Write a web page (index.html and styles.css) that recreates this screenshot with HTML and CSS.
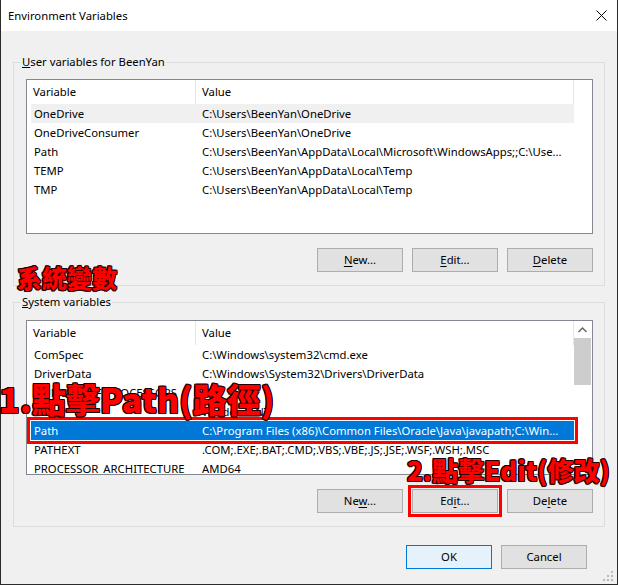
FILE: index.html
```html
<!DOCTYPE html>
<html lang="en">
<head>
<meta charset="utf-8">
<title>Environment Variables</title>
<link rel="stylesheet" href="styles.css">
</head>
<body>
<div class="window">
  <div class="titlebar">
    <span class="title">Environment Variables</span>
    <svg class="close" width="11" height="11" viewBox="0 0 11 11"><path d="M0.5 0.5L10.5 10.5M10.5 0.5L0.5 10.5" stroke="#000" stroke-width="1" fill="none"/></svg>
  </div>
  <div class="content">
    <fieldset class="group group-user">
      <legend><u>U</u>ser variables for BeenYan</legend>
      <div class="list">
        <div class="list-main">
          <div class="list-header"><div class="hcell hname">Variable</div><div class="hcell hvalue">Value</div></div>
          <div class="rows">
            <div class="row hover"><span class="name">OneDrive</span><span class="value">C:\Users\BeenYan\OneDrive</span></div>
            <div class="row"><span class="name">OneDriveConsumer</span><span class="value">C:\Users\BeenYan\OneDrive</span></div>
            <div class="row"><span class="name">Path</span><span class="value">C:\Users\BeenYan\AppData\Local\Microsoft\WindowsApps;;C:\Use...</span></div>
            <div class="row"><span class="name">TEMP</span><span class="value">C:\Users\BeenYan\AppData\Local\Temp</span></div>
            <div class="row"><span class="name">TMP</span><span class="value">C:\Users\BeenYan\AppData\Local\Temp</span></div>
          </div>
        </div>
        <div class="scroll-space"></div>
      </div>
      <div class="buttons">
        <button class="btn"><u>N</u>ew...</button>
        <button class="btn"><u>E</u>dit...</button>
        <button class="btn"><u>D</u>elete</button>
      </div>
    </fieldset>

    <fieldset class="group group-system">
      <legend><u>S</u>ystem variables</legend>
      <div class="list">
        <div class="list-main">
          <div class="list-header"><div class="hcell hname">Variable</div><div class="hcell hvalue">Value</div></div>
          <div class="rows">
            <div class="row"><span class="name">ComSpec</span><span class="value">C:\Windows\system32\cmd.exe</span></div>
            <div class="row"><span class="name">DriverData</span><span class="value">C:\Windows\System32\Drivers\DriverData</span></div>
            <div class="row"><span class="name">NUMBER_OF_PROCESSORS</span><span class="value">8</span></div>
            <div class="row"><span class="name">OS</span><span class="value">Windows_NT</span></div>
            <div class="row selected marked"><span class="name">Path</span><span class="value">C:\Program Files (x86)\Common Files\Oracle\Java\javapath;C:\Win...</span></div>
            <div class="row"><span class="name">PATHEXT</span><span class="value">.COM;.EXE;.BAT;.CMD;.VBS;.VBE;.JS;.JSE;.WSF;.WSH;.MSC</span></div>
            <div class="row"><span class="name">PROCESSOR_ARCHITECTURE</span><span class="value">AMD64</span></div>
          </div>
        </div>
        <div class="scrollbar">
          <div class="sb-arrow"><svg width="9" height="6" viewBox="0 0 9 6"><path d="M0.5 5L4.5 1L8.5 5" stroke="#606060" stroke-width="1.4" fill="none"/></svg></div>
          <div class="sb-thumb"></div>
        </div>
      </div>
      <div class="buttons">
        <button class="btn">Ne<u>w</u>...</button>
        <button class="btn marked">Ed<u>i</u>t...</button>
        <button class="btn">De<u>l</u>ete</button>
      </div>
    </fieldset>
  </div>
  <div class="footer">
    <button class="btn ok">OK</button>
    <button class="btn">Cancel</button>
  </div>
  <svg class="grip" width="10" height="10" viewBox="0 0 10 10">
    <rect x="8" y="0" width="2" height="2" fill="#b8b8b8"/>
    <rect x="4" y="4" width="2" height="2" fill="#b8b8b8"/>
    <rect x="8" y="4" width="2" height="2" fill="#b8b8b8"/>
    <rect x="0" y="8" width="2" height="2" fill="#b8b8b8"/>
    <rect x="4" y="8" width="2" height="2" fill="#b8b8b8"/>
    <rect x="8" y="8" width="2" height="2" fill="#b8b8b8"/>
  </svg>

  <div class="annot annot-sys">系統變數</div>
  <div class="annot annot-step1">1.點擊Path(路徑)</div>
  <div class="annot annot-step2">2.點擊Edit(修改)</div>
</div>
</body>
</html>
```

FILE: styles.css
```css
* { box-sizing: border-box; }
html, body { margin: 0; padding: 0; }
body {
  width: 618px;
  height: 585px;
  background: #f0f0f0;
  font-family: "Noto Sans", "Open Sans", sans-serif;
  font-size: 11.3px;
  color: #000;
  overflow: hidden;
}
.window {
  position: relative;
  width: 618px;
  height: 585px;
  background: #f0f0f0;
  border-left: 1px solid #2b2b2b;
  border-right: 1px solid #2b2b2b;
  border-bottom: 1px solid #2b2b2b;
  display: flex;
  flex-direction: column;
}
.titlebar {
  flex: none;
  height: 31px;
  background: #fff;
  display: flex;
  align-items: center;
  justify-content: space-between;
  padding: 0 10px 0 7px;
}
.title { line-height: 16px; }
.close { display: block; }

.content {
  padding: 23px 12px 0 12px;
}
.group {
  margin: 0;
  border: 1px solid #dcdcdc;
  padding: 9px 11px 13px 12px;
  min-width: 0;
}
.group-system { margin-top: 8px; padding-top: 10px; }
.group legend {
  padding: 0 1px;
  margin-left: -5px;
  line-height: 16px;
}
.list {
  height: 155px;
  background: #fff;
  border: 1px solid #828790;
  display: flex;
  overflow: hidden;
}
.list-main { flex: 1; min-width: 0; }
.scroll-space { flex: none; width: 18px; }
.list-header {
  display: flex;
  height: 24px;
}
.hcell {
  display: flex;
  align-items: center;
  border-right: 1px solid #e5e5e5;
  line-height: 16px;
}
.hname { width: 169px; padding-left: 6px; }
.hvalue { flex: 1; padding-left: 6px; }
.rows { padding-left: 4px; }
.row {
  display: flex;
  height: 19px;
  align-items: center;
  white-space: nowrap;
  line-height: 16px;
}
.row .name { width: 171px; padding-left: 3px; flex: none; }
.row .value { flex: 1; overflow: hidden; }
.row.hover { background: #f0f0f0; }
.row.selected { background: #0078d7; color: #fff; }
.marked {
  outline: 3px solid #ff0000;
  outline-offset: 1px;
}
.scrollbar {
  flex: none;
  width: 18px;
  display: flex;
  flex-direction: column;
  padding-right: 1px;
}
.sb-arrow {
  height: 17px;
  display: flex;
  align-items: center;
  justify-content: center;
}
.sb-arrow svg { display: block; }
.sb-thumb {
  height: 47px;
  background: #cdcdcd;
}

.buttons {
  display: flex;
  justify-content: flex-end;
  gap: 9px;
  margin-top: 14px;
}
.btn {
  width: 86px;
  height: 24px;
  background: #e1e1e1;
  border: 1px solid #adadad;
  font-family: inherit;
  font-size: 11.3px;
  color: #000;
  padding: 0;
  line-height: 16px;
}
.btn u { text-underline-offset: 2px; }
.footer {
  display: flex;
  justify-content: flex-end;
  gap: 9px;
  margin-top: 18px;
  padding-right: 30px;
}
.btn.ok {
  background: #e5f1fb;
  border-color: #0078d7;
}
.grip {
  position: absolute;
  right: 4px;
  bottom: 3px;
}

.annot {
  position: absolute;
  font-family: "Noto Sans CJK TC", "Noto Sans", sans-serif;
  font-weight: 900;
  color: #ff0000;
  line-height: 1;
  white-space: nowrap;
  text-shadow:
    -1px -1px 0 #200000, 1px -1px 0 #200000,
    -1px 1px 0 #200000, 1px 1px 0 #200000,
    0 1px 0 #200000, 0 -1px 0 #200000,
    1px 0 0 #200000, -1px 0 0 #200000;
}
.annot-sys { left: 16px; top: 265px; font-size: 25px; }
.annot-step1 { left: -2px; top: 382px; font-size: 34px; }
.annot-step2 { left: 406px; top: 457px; font-size: 26px; }
```
